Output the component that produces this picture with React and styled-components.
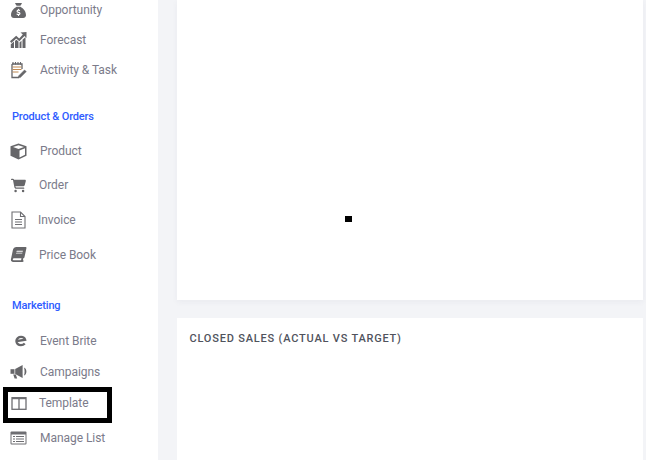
import React from 'react';
import styled, { createGlobalStyle } from 'styled-components';
import {
  FaSackDollar,
  FaCartShopping,
  FaBook,
} from 'react-icons/fa6';

const GlobalStyle = createGlobalStyle`
    html, body {
        margin: 0;
        padding: 0;
        height: 460px;
        overflow: hidden;
        background-color: #f3f4f7;
        font-family: Roboto, "Liberation Sans", sans-serif;
    }
`;

const Page = styled.div`
    position: relative;
    display: flex;
    width: 646px;
    height: 460px;
    overflow: hidden;
`;

const Sidebar = styled.nav`
    width: 158px;
    height: 460px;
    flex-shrink: 0;
    overflow: hidden;
    background-color: #fff;
`;

const Menu = styled.div`
    display: flex;
    flex-direction: column;
    margin-top: -5px;
`;

const Heading = styled.div`
    display: flex;
    align-items: center;
    box-sizing: border-box;
    height: ${props => props.$height}px;
    padding-left: 12px;
    padding-top: ${props => props.$top}px;
    font-size: 11px;
    font-weight: 500;
    letter-spacing: -0.15px;
    color: #2f5cff;
`;

const Row = styled.a`
    display: flex;
    align-items: center;
    height: ${props => props.$height}px;
    padding-left: 10px;
    font-size: 12px;
    letter-spacing: -0.05px;
    color: #7b7b8a;
`;

const IconSlot = styled.span`
    display: flex;
    align-items: center;
    justify-content: center;
    width: 17px;
    height: 17px;
    flex-shrink: 0;
    margin-right: ${props => props.$gap}px;
    color: #666669;
`;

const Content = styled.main`
    flex: 1;
    display: flex;
    flex-direction: column;
    gap: 18px;
    padding: 0 3px 0 19px;
    min-width: 0;
`;

const TopCard = styled.section`
    height: 300px;
    flex-shrink: 0;
    background-color: #fff;
    box-shadow: 0 2px 6px rgba(60, 64, 90, 0.05);
`;

const SalesCard = styled.section`
    flex: 1;
    padding: 14px 12.5px;
    background-color: #fff;
`;

const CardTitle = styled.h3`
    margin: 0;
    font-size: 11px;
    line-height: 13px;
    font-weight: 500;
    letter-spacing: 0.8px;
    color: #50535d;
`;

const Marker = styled.div`
    position: absolute;
    left: 3px;
    top: 387px;
    width: 109px;
    height: 36px;
    box-sizing: border-box;
    border: 5px solid #000;
`;

const Loader = styled.div`
    position: absolute;
    left: 345px;
    top: 216px;
    width: 7px;
    height: 6px;
    background-color: #000;
`;

const EventSvg = styled.svg`
    margin-left: 4px;
    flex-shrink: 0;
`;

const ForecastIcon = () => (
  <svg width="17" height="17" viewBox="0 0 17 17" fill="currentColor">
    <path d="M10.5 .5 16.5 0v6l-2-1.9-5.2 5.1-3-2.6-5 4.4L0 9.2l6.2-5.4 3 2.6 3.6-3.9z" />
    <path d="M.8 12.2 4 9.6V16H.8zM5 9l1.4-1.2L8.5 9.6V16H5zM9.5 10.6l2-1.9V16h-2zM12.5 7.7l3-2.8V16h-3z" />
  </svg>
);

const ActivityIcon = () => (
  <svg width="17" height="18" viewBox="0 0 17 18" fill="none" stroke="currentColor">
    <path d="M2 3h10v5M2 3v13.5h7" strokeWidth="1.3" />
    <path d="M3 1v2.5M5.5 1v2.5M8 1v2.5M10.5 1v2.5" strokeWidth="1.1" />
    <path d="M2.5 6h9M2.5 8.5h9M2.5 11h6" strokeWidth="1" stroke="#c08a52" />
    <path d="m8.5 15 6-6 1.8 1.6-6 6H8.5z" fill="currentColor" strokeWidth=".5" />
  </svg>
);

const CubeIcon = () => (
  <svg width="17" height="17" viewBox="0 0 17 17">
    <path d="M8.5 .5 16.5 3.3v9.4L8.5 16.5.5 12.7V3.3z" fill="currentColor" />
    <path d="M8.5 2.2 14 4 8.5 6.1 3 4z" fill="#fff" />
    <path d="M9.5 7.4 15 5.3v6.5l-5.5 2.7z" fill="#fff" />
  </svg>
);

const InvoiceIcon = () => (
  <svg width="15" height="18" viewBox="0 0 15 18" fill="none" stroke="#6e6e72" strokeWidth="1.1">
    <path d="M1 1h8.5L14 5.5V17H1z" />
    <path d="M9.5 1v4.5H14" />
    <path d="M4 8.5h7M4 11h7M4 13.5h7" />
  </svg>
);

const EventIcon = () => (
  <EventSvg width="12" height="12" viewBox="0 0 15 13" fill="none" stroke="currentColor" strokeWidth="3">
    <path d="M2 6.6 12.6 5C12 2.8 10 1.4 7.6 1.4 4.4 1.4 1.8 3.6 1.8 6.6c0 3 2.4 5 5.6 5 2 0 3.6-.7 4.8-2" />
  </EventSvg>
);

const HornIcon = () => (
  <svg width="17" height="15" viewBox="0 0 17 15" fill="currentColor">
    <path d="M.5 5.2h4v4.6h-4z" />
    <path d="M5.2 5 12.6 1v13L5.2 10z" />
    <path d="M3.2 10.4h2.6l1.4 4H4.6z" />
    <path d="M14 3.4c1.6.6 2.4 2.2 2.4 4.1s-.8 3.5-2.4 4.1c.4-1.2.6-2.6.6-4.1s-.2-2.9-.6-4.1z" />
  </svg>
);

const TemplateIcon = () => (
  <svg width="16" height="15" viewBox="0 0 16 15" fill="none" stroke="#6e6e72" strokeWidth="1.3">
    <rect x="1" y="1.7" width="14" height="11.6" />
    <path d="M8 1.7v11.6" />
    <path d="M1 2.4h14" strokeWidth="1.6" />
  </svg>
);

const ListIcon = () => (
  <svg width="17" height="14" viewBox="0 0 17 14">
    <rect x=".5" y=".5" width="16" height="13" rx="1" fill="#6e6e72" />
    <rect x="1.5" y="3.5" width="14" height="9" fill="#fff" />
    <path d="M3 5.5h2M6 5.5h8M3 8h2M6 8h8M3 10.5h2M6 10.5h8" stroke="#6e6e72" strokeWidth="1.1" />
  </svg>
);

const groups = [
  [
    { label: 'Opportunity', icon: <FaSackDollar size={15} />, height: 30, gap: 13 },
    { label: 'Forecast', icon: <ForecastIcon />, height: 30, gap: 13 },
    { label: 'Activity & Task', icon: <ActivityIcon />, height: 30, gap: 13 },
  ],
  [
    { label: 'Product', icon: <CubeIcon />, height: 34, gap: 13 },
    { label: 'Order', icon: <FaCartShopping size={15} />, height: 34, gap: 12 },
    { label: 'Invoice', icon: <InvoiceIcon />, height: 35, gap: 11 },
    { label: 'Price Book', icon: <FaBook size={15} style={{ transform: 'skewX(-12deg)' }} />, height: 35, gap: 12 },
  ],
  [
    { label: 'Event Brite', icon: <EventIcon />, height: 31, gap: 13 },
    { label: 'Campaigns', icon: <HornIcon />, height: 31, gap: 13 },
    { label: 'Template', icon: <TemplateIcon />, height: 32, gap: 12 },
    { label: 'Manage List', icon: <ListIcon />, height: 38, gap: 13 },
  ],
];

const MenuGroup = ({ items }) => (
  <>
    {items.map((item) => (
      <Row key={item.label} $height={item.height}>
        <IconSlot $gap={item.gap}>{item.icon}</IconSlot>
        {item.label}
      </Row>
    ))}
  </>
);

export default function App() {
  return (
    <Page>
      <GlobalStyle />
      <Sidebar>
        <Menu>
          <MenuGroup items={groups[0]} />
          <Heading $height={49} $top={13}>Product &amp; Orders</Heading>
          <MenuGroup items={groups[1]} />
          <Heading $height={53} $top={13}>Marketing</Heading>
          <MenuGroup items={groups[2]} />
        </Menu>
      </Sidebar>
      <Content>
        <TopCard />
        <SalesCard>
          <CardTitle>CLOSED SALES (ACTUAL VS TARGET)</CardTitle>
        </SalesCard>
      </Content>
      <Loader />
      <Marker />
    </Page>
  );
}
